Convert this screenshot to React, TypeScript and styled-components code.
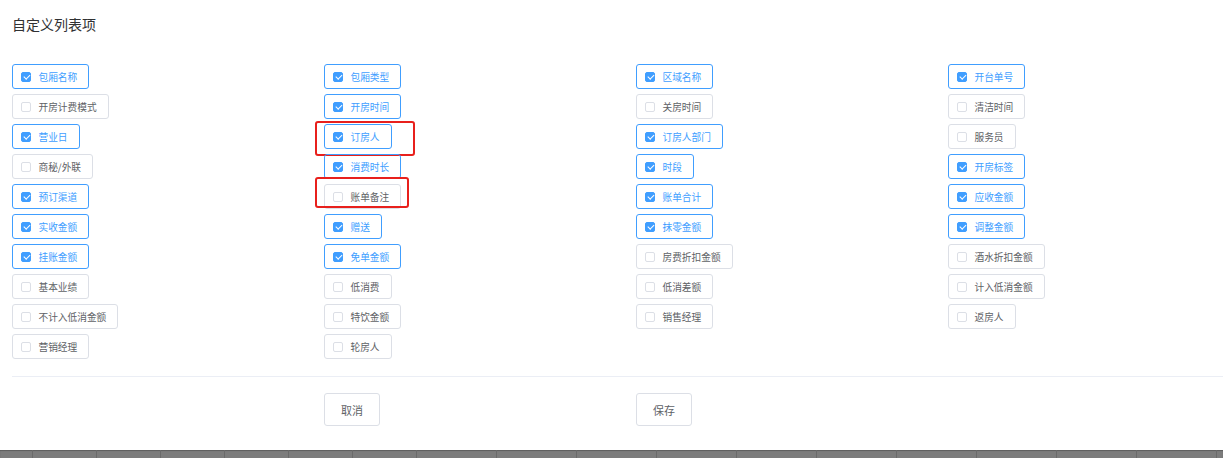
import React from "react"
import styled, { createGlobalStyle } from "styled-components"

const GlobalStyle = createGlobalStyle`
  html, body {
    margin: 0;
    padding: 0;
    background: #ffffff;
    font-family: "Noto Sans CJK SC", "Liberation Sans", sans-serif;
  }
`

type Item = { label: string; checked: boolean; mark?: Mark }
type Mark = { top: number; left: number; right: number; bottom: number }

const columns: Item[][] = [
  [
    { label: "包厢名称", checked: true },
    { label: "开房计费模式", checked: false },
    { label: "营业日", checked: true },
    { label: "商秘/外联", checked: false },
    { label: "预订渠道", checked: true },
    { label: "实收金额", checked: true },
    { label: "挂账金额", checked: true },
    { label: "基本业绩", checked: false },
    { label: "不计入低消金额", checked: false },
    { label: "营销经理", checked: false },
  ],
  [
    { label: "包厢类型", checked: true },
    { label: "开房时间", checked: true },
    { label: "订房人", checked: true, mark: { top: -4, left: -10, right: -24, bottom: -8 } },
    { label: "消费时长", checked: true },
    { label: "账单备注", checked: false, mark: { top: -8, left: -10, right: -9, bottom: 0 } },
    { label: "赠送", checked: true },
    { label: "免单金额", checked: true },
    { label: "低消费", checked: false },
    { label: "特饮金额", checked: false },
    { label: "轮房人", checked: false },
  ],
  [
    { label: "区域名称", checked: true },
    { label: "关房时间", checked: false },
    { label: "订房人部门", checked: true },
    { label: "时段", checked: true },
    { label: "账单合计", checked: true },
    { label: "抹零金额", checked: true },
    { label: "房费折扣金额", checked: false },
    { label: "低消差额", checked: false },
    { label: "销售经理", checked: false },
  ],
  [
    { label: "开台单号", checked: true },
    { label: "清洁时间", checked: false },
    { label: "服务员", checked: false },
    { label: "开房标签", checked: true },
    { label: "应收金额", checked: true },
    { label: "调整金额", checked: true },
    { label: "酒水折扣金额", checked: false },
    { label: "计入低消金额", checked: false },
    { label: "返房人", checked: false },
  ],
]

// widths of the table header cells peeking out under the dialog
const headerCells = [33, 64, 64, 64, 64, 64, 64, 80, 80, 80, 80, 80, 80, 80, 80, 80, 80]

export default function App() {
  return (
    <>
      <GlobalStyle />
      <Page>
        <Dialog>
          <Title>自定义列表项</Title>
          <ColumnsGrid>
            {columns.map((col, ci) => (
              <Column key={ci}>
                {col.map((item) => (
                  <Option key={item.label} $checked={item.checked}>
                    <Box $checked={item.checked} />
                    <span>{item.label}</span>
                    {item.mark && <Annotation $mark={item.mark} />}
                  </Option>
                ))}
              </Column>
            ))}
          </ColumnsGrid>
          <Divider />
          <Footer>
            <span />
            <Button>取消</Button>
            <Button>保存</Button>
          </Footer>
        </Dialog>
        <TableHeader>
          {headerCells.map((w, i) => (
            <HeaderCell key={i} $w={w} />
          ))}
        </TableHeader>
      </Page>
    </>
  )
}

const Page = styled.div`
  width: 1223px;
  height: 458px;
  overflow: hidden;
  display: flex;
  flex-direction: column;
`

const Dialog = styled.div`
  height: 450px;
  box-sizing: border-box;
  padding: 14px 0 0 12px;
  background: #fff;
`

const Title = styled.div`
  font-size: 14px;
  line-height: 20px;
  color: #303133;
`

const ColumnsGrid = styled.div`
  display: grid;
  grid-template-columns: repeat(4, 312px);
  margin-top: 30px;
`

const Column = styled.div`
  display: flex;
  flex-direction: column;
  align-items: flex-start;
  gap: 5px;
`

const Option = styled.label<{ $checked: boolean }>`
  position: relative;
  display: flex;
  align-items: center;
  gap: 7.5px;
  height: 25px;
  box-sizing: border-box;
  padding: 0 11px 0 8px;
  border: 1px solid ${(p) => (p.$checked ? "#409eff" : "#dcdfe6")};
  border-radius: 3px;
  font-size: 9.7px;
  color: ${(p) => (p.$checked ? "#409eff" : "#606266")};
  white-space: nowrap;
`

const Box = styled.span<{ $checked: boolean }>`
  position: relative;
  width: 10px;
  height: 10px;
  box-sizing: border-box;
  border-radius: 2px;
  border: 1px solid ${(p) => (p.$checked ? "#409eff" : "#dcdfe6")};
  background: ${(p) => (p.$checked ? "#409eff" : "#fff")};
  &::after {
    content: "";
    display: ${(p) => (p.$checked ? "block" : "none")};
    position: absolute;
    left: 2.5px;
    top: 0.5px;
    width: 2.5px;
    height: 5px;
    border: 1px solid #fff;
    border-left: 0;
    border-top: 0;
    transform: rotate(45deg);
  }
`

const Annotation = styled.span<{ $mark: Mark }>`
  position: absolute;
  top: ${(p) => p.$mark.top}px;
  left: ${(p) => p.$mark.left}px;
  right: ${(p) => p.$mark.right}px;
  bottom: ${(p) => p.$mark.bottom}px;
  border: 2px solid #e8201c;
  border-radius: 3px;
  pointer-events: none;
`

const Divider = styled.div`
  height: 1px;
  background: #ebeef5;
  margin-top: 17px;
`

const Footer = styled.div`
  display: grid;
  grid-template-columns: repeat(3, 312px);
  align-items: start;
  padding-top: 16px;
`

const Button = styled.button`
  width: 56px;
  height: 33px;
  padding: 0;
  border: 1px solid #dcdfe6;
  border-radius: 3px;
  background: #fff;
  color: #606266;
  font-family: inherit;
  font-size: 11px;
`

const TableHeader = styled.div`
  flex: 1;
  display: flex;
  background: #7c7c7c;
  box-shadow: inset 0 1px 1px rgba(0, 0, 0, 0.25);
`

const HeaderCell = styled.div<{ $w: number }>`
  flex: 0 0 ${(p) => p.$w}px;
  border-right: 1px solid #6a6a6a;
  box-sizing: border-box;
`
